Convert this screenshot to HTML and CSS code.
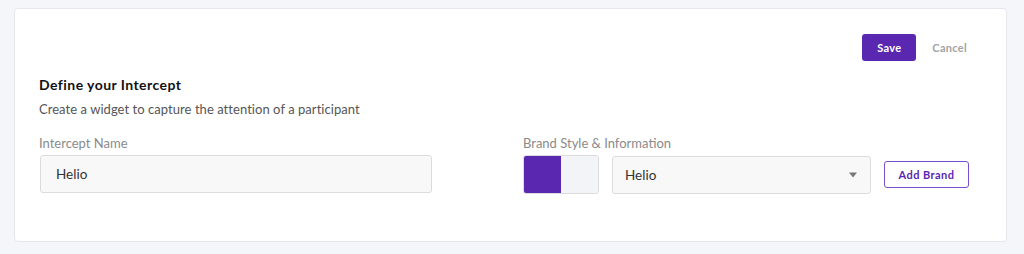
FILE: index.html
```html
<!DOCTYPE html>
<html>
<head>
<meta charset="utf-8">
<link rel="stylesheet" href="styles.css">
</head>
<body>
<div class="page">
  <section class="card">
    <div class="actions">
      <button class="btn btn-primary">Save</button>
      <button class="btn btn-link">Cancel</button>
    </div>
    <h2 class="title">Define your Intercept</h2>
    <p class="subtitle">Create a widget to capture the attention of a participant</p>
    <div class="fields">
      <div class="field field-name">
        <label class="label">Intercept Name</label>
        <div class="input">Helio</div>
      </div>
      <div class="field field-brand">
        <label class="label">Brand Style &amp; Information</label>
        <div class="brand-row">
          <div class="swatch"><span class="swatch-color"></span><span class="swatch-rest"></span></div>
          <div class="select">
            <span>Helio</span>
            <svg class="caret" width="8" height="6" viewBox="0 0 8 6"><path d="M0 0.5h8L4 5.5z" fill="#777"/></svg>
          </div>
          <button class="btn btn-outline">Add Brand</button>
        </div>
      </div>
    </div>
  </section>
</div>
</body>
</html>
```
FILE: styles.css
```css
* { box-sizing: border-box; }
html, body { margin: 0; padding: 0; }
body {
  background: #f5f6fa;
  font-family: "Lato", "Open Sans", sans-serif;
  color: #222;
  width: 1024px;
  height: 254px;
  overflow: hidden;
}
.page {
  padding: 8px 17px 0 14px;
}
.card {
  background: #fff;
  border: 1px solid #e5e7ec;
  border-radius: 4px;
  height: 234px;
  padding: 25px 25px 0 24px;
}
.actions {
  display: flex;
  justify-content: flex-end;
}
.btn {
  font-family: inherit;
  font-size: 11px;
  font-weight: 700;
  height: 27px;
  padding: 0 14px;
  border-radius: 3px;
  border: 1px solid transparent;
  background: transparent;
  cursor: pointer;
  line-height: 25px;
  letter-spacing: 0.3px;
}
.btn-primary {
  background: #5a28b0;
  color: #fff;
}
.btn-link {
  color: #a3a3a3;
  padding: 0 13px 0 15px;
}
.title {
  margin: 15px 0 0;
  font-size: 14px;
  font-weight: 700;
  line-height: 18px;
  color: #111;
  letter-spacing: 0.45px;
}
.subtitle {
  margin: 6px 0 0;
  font-size: 13px;
  line-height: 18px;
  color: #555;
  letter-spacing: 0.05px;
}
.fields {
  display: flex;
  margin-top: 16px;
}
.field-name { width: 392px; }
.field-brand { margin-left: 92px; }
.label {
  display: block;
  font-size: 13px;
  line-height: 18px;
  color: #8a8a8a;
  margin-bottom: 3px;
}
.input, .select {
  height: 38px;
  border: 1px solid #dcdcdc;
  border-radius: 3px;
  background: #f8f8f8;
  font-size: 13.5px;
  color: #333;
  display: flex;
  align-items: center;
  padding: 0 15px;
}
.input { width: 392px; margin-left: 1px; }
.brand-row {
  display: flex;
  align-items: center;
}
.swatch {
  width: 76px;
  height: 39px;
  border: 1px solid #dcdcdc;
  border-radius: 3px;
  display: flex;
  overflow: hidden;
}
.swatch-color { width: 37px; background: #5a28b0; }
.swatch-rest { flex: 1; background: #f3f4f7; }
.select {
  width: 259px;
  margin-left: 13px;
  justify-content: space-between;
  padding: 0 13px 0 12px;
}
.caret { margin-top: 1px; }
.btn-outline {
  margin-left: 13px;
  border-color: #7a4fcc;
  color: #5a28b0;
  background: #fff;
  width: 85px;
  padding: 0;
  letter-spacing: 0.45px;
}
```
